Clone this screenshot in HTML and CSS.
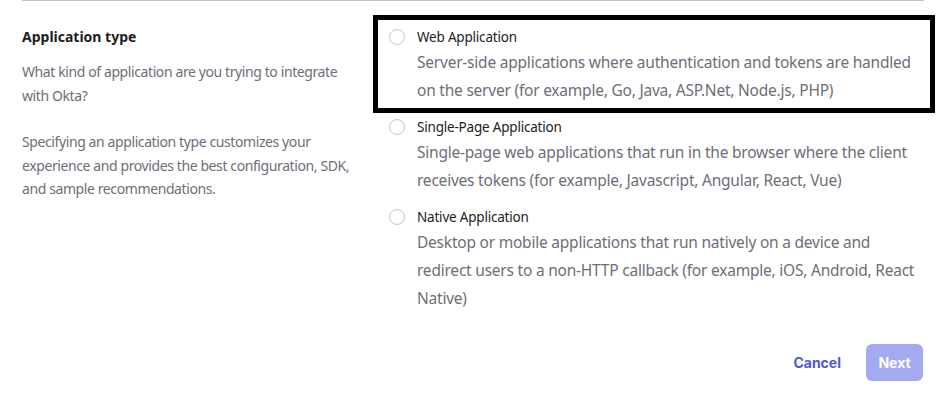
FILE: index.html
```html
<!DOCTYPE html>
<html lang="en">
<head>
<meta charset="utf-8">
<title>Application type</title>
<link rel="stylesheet" href="styles.css">
</head>
<body>
<div class="page">
  <div class="divider"></div>
  <section class="field">
    <div class="field-info">
      <h2 class="field-title">Application type</h2>
      <p class="field-text">What kind of application are you trying to integrate<br>with Okta?</p>
      <p class="field-text">Specifying an application type customizes your<br>experience and provides the best configuration, SDK,<br>and sample recommendations.</p>
    </div>
    <div class="options">
      <label class="option option-highlight">
        <span class="radio"></span>
        <span class="option-body">
          <span class="option-title">Web Application</span>
          <span class="option-desc">Server-side applications where authentication and tokens are handled<br>on the server (for example, Go, Java, ASP.Net, Node.js, PHP)</span>
        </span>
      </label>
      <label class="option">
        <span class="radio"></span>
        <span class="option-body">
          <span class="option-title">Single-Page Application</span>
          <span class="option-desc">Single-page web applications that run in the browser where the client<br>receives tokens (for example, Javascript, Angular, React, Vue)</span>
        </span>
      </label>
      <label class="option">
        <span class="radio"></span>
        <span class="option-body">
          <span class="option-title">Native Application</span>
          <span class="option-desc">Desktop or mobile applications that run natively on a device and<br>redirect users to a non-HTTP callback (for example, iOS, Android, React<br>Native)</span>
        </span>
      </label>
    </div>
  </section>
  <div class="actions">
    <button class="btn btn-link" type="button">Cancel</button>
    <button class="btn btn-primary" type="button" disabled>Next</button>
  </div>
</div>
</body>
</html>
```

FILE: styles.css
```css
* { box-sizing: border-box; }

html, body {
  margin: 0;
  padding: 0;
  background: #ffffff;
}

body {
  font-family: "Noto Sans", "Open Sans", "DejaVu Sans", sans-serif;
  color: #1d1d21;
  width: 948px;
  height: 402px;
  overflow: hidden;
}

.page {
  display: flex;
  flex-direction: column;
}

.divider {
  height: 1px;
  background: #c4c4cc;
  margin: 0 24px 0 22px;
}

.field {
  display: grid;
  grid-template-columns: 356px 552px;
  padding: 19px 0 0 22px;
}

.field-info {
  padding-top: 6px;
}

.field-title {
  margin: 0 0 12px;
  font-size: 14px;
  line-height: 22px;
  font-weight: 700;
  color: #1d1d21;
}

.field-text {
  margin: 0 0 23px;
  font-size: 14px;
  line-height: 23.6px;
  color: #6e6e78;
  letter-spacing: -0.4px;
}

.options {
  display: flex;
  flex-direction: column;
  gap: 2px;
}

.option {
  display: flex;
  align-items: flex-start;
  gap: 12px;
  padding: 6px 0 4px 11px;
}

.option-highlight {
  outline: 5px solid #000000;
}

.radio {
  flex: none;
  width: 16px;
  height: 16px;
  margin-top: 3px;
  border: 1.5px solid #c8c8cc;
  border-radius: 50%;
  background: #ffffff;
}

.option-body {
  display: flex;
  flex-direction: column;
}

.option-title {
  font-size: 13.5px;
  line-height: 22px;
  color: #1d1d21;
  letter-spacing: -0.2px;
}

.option-desc {
  font-size: 15.5px;
  line-height: 28px;
  color: #6e6e78;
  letter-spacing: -0.22px;
  white-space: nowrap;
}

.actions {
  display: flex;
  justify-content: flex-end;
  align-items: center;
  gap: 13px;
  margin-top: 28px;
  padding-right: 25px;
}

.btn {
  font-family: "Inter", "Liberation Sans", sans-serif;
  font-size: 14px;
  font-weight: 700;
  height: 37px;
  border: 0;
  border-radius: 6px;
  padding: 0 12px;
  cursor: pointer;
}

.btn-link {
  background: transparent;
  color: #5157d8;
}

.btn-primary {
  width: 57px;
  padding: 0;
  background: #a4aaef;
  color: #ffffff;
}
```
